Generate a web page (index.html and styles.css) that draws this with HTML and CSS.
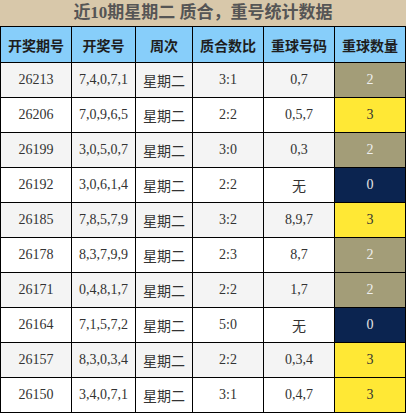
FILE: index.html
```html
<!DOCTYPE html>
<html lang="zh">
<head>
<meta charset="utf-8">
<title>近10期星期二 质合，重号统计数据</title>
<link rel="stylesheet" href="styles.css">
</head>
<body>
<div class="title">近10期星期二 质合，重号统计数据</div>
<table class="stats">
  <thead>
    <tr>
      <th class="w-issue">开奖期号</th>
      <th class="w-nums">开奖号</th>
      <th class="w-week">周次</th>
      <th class="w-ratio">质合数比</th>
      <th class="w-rep">重球号码</th>
      <th class="w-count">重球数量</th>
    </tr>
  </thead>
  <tbody>
    <tr><td>26213</td><td>7,4,0,7,1</td><td class="cjk">星期二</td><td>3:1</td><td>0,7</td><td class="c2">2</td></tr>
    <tr><td>26206</td><td>7,0,9,6,5</td><td class="cjk">星期二</td><td>2:2</td><td>0,5,7</td><td class="c3">3</td></tr>
    <tr><td>26199</td><td>3,0,5,0,7</td><td class="cjk">星期二</td><td>3:0</td><td>0,3</td><td class="c2">2</td></tr>
    <tr><td>26192</td><td>3,0,6,1,4</td><td class="cjk">星期二</td><td>2:2</td><td class="cjk">无</td><td class="c0">0</td></tr>
    <tr><td>26185</td><td>7,8,5,7,9</td><td class="cjk">星期二</td><td>3:2</td><td>8,9,7</td><td class="c3">3</td></tr>
    <tr><td>26178</td><td>8,3,7,9,9</td><td class="cjk">星期二</td><td>2:3</td><td>8,7</td><td class="c2">2</td></tr>
    <tr><td>26171</td><td>0,4,8,1,7</td><td class="cjk">星期二</td><td>2:2</td><td>1,7</td><td class="c2">2</td></tr>
    <tr><td>26164</td><td>7,1,5,7,2</td><td class="cjk">星期二</td><td>5:0</td><td class="cjk">无</td><td class="c0">0</td></tr>
    <tr><td>26157</td><td>8,3,0,3,4</td><td class="cjk">星期二</td><td>2:2</td><td>0,3,4</td><td class="c3">3</td></tr>
    <tr><td>26150</td><td>3,4,0,7,1</td><td class="cjk">星期二</td><td>3:1</td><td>0,4,7</td><td class="c3">3</td></tr>
  </tbody>
</table>
</body>
</html>
```

FILE: styles.css
```css
html, body {
  margin: 0;
  padding: 0;
  background: #ffffff;
}
body {
  width: 406px;
  font-family: "Liberation Serif", "Noto Sans CJK SC", serif;
}
.title {
  height: 26px;
  line-height: 26px;
  background: #d8c8aa;
  color: #555555;
  font-size: 17px;
  font-weight: bold;
  text-align: center;
  font-family: "Liberation Serif", "Noto Sans CJK SC", serif;
}
.stats {
  width: 406px;
  box-sizing: border-box;
  border-collapse: separate;
  border-spacing: 0;
  table-layout: fixed;
  border-top: 1px solid #000;
  border-left: 1px solid #000;
}
.stats th,
.stats td {
  box-sizing: border-box;
  border-right: 1px solid #000;
  border-bottom: 1px solid #000;
  padding: 0;
  text-align: center;
  vertical-align: middle;
  white-space: nowrap;
}
.stats th {
  height: 36px;
  background: #87cefa;
  color: #1e1e1e;
  font-size: 14px;
  font-weight: bold;
  font-family: "Noto Sans CJK SC", sans-serif;
}
.w-issue { width: 71px; }
.w-nums { width: 64px; }
.w-week { width: 57px; }
.w-ratio { width: 71px; }
.w-rep { width: 71px; }
.w-count { width: 71px; }
.stats td {
  height: 35px;
  font-size: 14px;
  color: #333333;
}
.stats tbody tr:nth-child(odd) td {
  background: #f4f4f4;
}
.stats tbody tr:nth-child(even) td {
  background: #ffffff;
}
.stats td.cjk {
  font-family: "Noto Sans CJK SC", sans-serif;
  font-size: 14px;
}
.stats tbody tr td.c2 {
  background: #a39d78;
  color: #eeeeee;
}
.stats tbody tr td.c3 {
  background: #ffe835;
  color: #333333;
}
.stats tbody tr td.c0 {
  background: #0b2450;
  color: #e6e6e6;
}
```
